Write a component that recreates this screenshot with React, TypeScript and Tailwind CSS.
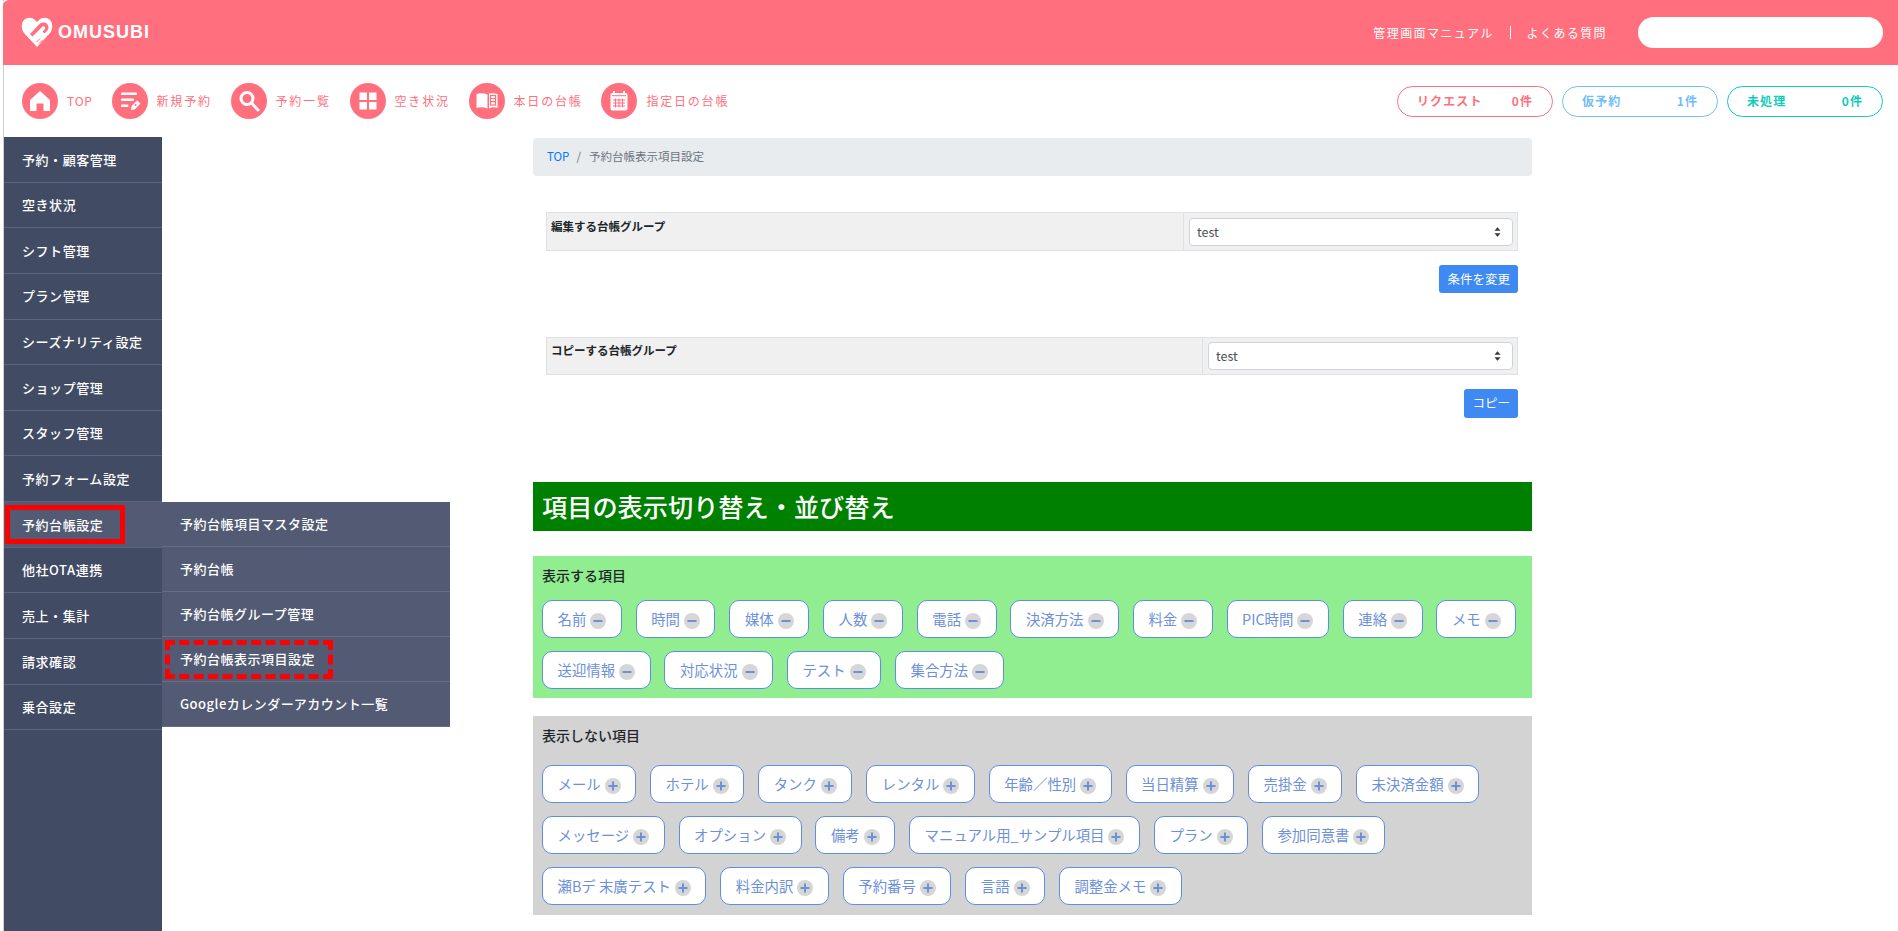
const FONT = '[font-family:"Noto_Sans_CJK_JP","Noto_Sans",sans-serif]';

const sideItems = [
  '予約・顧客管理',
  '空き状況',
  'シフト管理',
  'プラン管理',
  'シーズナリティ設定',
  'ショップ管理',
  'スタッフ管理',
  '予約フォーム設定',
  '予約台帳設定',
  '他社OTA連携',
  '売上・集計',
  '請求確認',
  '乗合設定',
];

const subItems = [
  '予約台帳項目マスタ設定',
  '予約台帳',
  '予約台帳グループ管理',
  '予約台帳表示項目設定',
  'Googleカレンダーアカウント一覧',
];

const shown = ['名前', '時間', '媒体', '人数', '電話', '決済方法', '料金', 'PIC時間', '連絡', 'メモ', '送迎情報', '対応状況', 'テスト', '集合方法'];
const hidden = [
  'メール', 'ホテル', 'タンク', 'レンタル', '年齢／性別', '当日精算', '売掛金', '未決済金額',
  'メッセージ', 'オプション', '備考', 'マニュアル用_サンプル項目', 'プラン', '参加同意書',
  '瀬Bデ 末廣テスト', '料金内訳', '予約番号', '言語', '調整金メモ',
];

function LogoMark() {
  return (
    <svg width="32" height="31" viewBox="0 0 32 31" className="shrink-0">
      <path d="M16 30 L3 16 C0 12 0 6 3 3 C6 0 11 0 14 3 L16 5 L18 3 C21 0 26 0 29 3 C32 6 32 12 29 16 Z" fill="#fff" />
      <path d="M9 17 L19 6.5 C21 5 24.5 5 26.2 7 C28 9 28 12 26 14 L23.5 16.5 L21.5 14.5 L24 12 C25 10.5 23 8.5 21.5 9.5 L11.5 19.5 Z" fill="#ff6f7d" />
      <path d="M13 19 L18 14 L24 18 L18.5 24 Z" fill="#fff" />
      <path d="M15.5 25 L19 21.5 M18 26.5 L21.5 23" stroke="#ff6f7d" strokeWidth="1" />
    </svg>
  );
}

function NavIcon({ name }: { name: string }) {
  return (
    <svg width="36" height="36" viewBox="0 0 36 36" className="shrink-0">
      <circle cx="18" cy="18" r="18" fill="#ff6f7d" />
      {name === 'home' && (
        <path d="M18 8 L28 17 V28 H21.5 V20.5 H14.5 V28 H8 V17 Z" fill="#fff" />
      )}
      {name === 'list' && (
        <g>
          <rect x="9" y="9.5" width="16" height="2.6" rx="1" fill="#fff" />
          <rect x="9" y="15.5" width="13" height="2.6" rx="1" fill="#fff" />
          <rect x="9" y="21.5" width="7.5" height="2.6" rx="1" fill="#fff" />
          <path d="M19 27 L19.6 23 L25 17.5 L28.5 20.5 L23 26.2 Z" fill="#fff" />
          <circle cx="23.6" cy="22" r="1" fill="#ff6f7d" />
        </g>
      )}
      {name === 'search' && (
        <g fill="none" stroke="#fff">
          <circle cx="16" cy="15.5" r="6" strokeWidth="3" />
          <path d="M20.5 20 L27 27" strokeWidth="3" strokeLinecap="round" />
        </g>
      )}
      {name === 'grid' && (
        <g fill="#fff">
          <rect x="9.5" y="9.5" width="7.5" height="7.5" />
          <rect x="19" y="9.5" width="7.5" height="7.5" />
          <rect x="9.5" y="19" width="7.5" height="7.5" />
          <rect x="19" y="19" width="7.5" height="7.5" />
        </g>
      )}
      {name === 'book' && (
        <g>
          <path d="M7.5 11 C11 10 14.5 10 18.5 11.5 V25.5 C14.5 24 11 24 7.5 25 Z" fill="#fff" />
          <path d="M20 10.5 C22.5 10 25.5 10 28.5 11 V25 C25.5 24 22.5 24 20 25.5 Z" fill="#fff" />
          <rect x="21.5" y="12.5" width="5" height="9.5" fill="none" stroke="#ff6f7d" strokeWidth="1.2" />
          <path d="M21.5 15.5 H26.5 M21.5 18.7 H26.5" stroke="#ff6f7d" strokeWidth="1.2" />
        </g>
      )}
      {name === 'calendar' && (
        <g>
          <rect x="9.5" y="10" width="17" height="17.5" rx="2" fill="#fff" />
          <rect x="12" y="8" width="1.8" height="3.5" fill="#fff" />
          <rect x="22.2" y="8" width="1.8" height="3.5" fill="#fff" />
          <rect x="11" y="12.2" width="14" height="1" fill="#ff6f7d" />
          <path d="M12 17 H24 M12 20 H24 M12 23 H24 M14.5 15.5 V24.5 M18 15.5 V24.5 M21.5 15.5 V24.5" stroke="#ff6f7d" strokeWidth="1" />
        </g>
      )}
    </svg>
  );
}

function StatusPill({ label, count, className }: { label: string; count: string; className: string }) {
  return (
    <div className={`flex h-[31px] w-[156px] items-center justify-between rounded-full border bg-white pl-[19px] pr-[19px] text-[12px] font-bold tracking-[1.1px] ${className}`}>
      <span>{label}</span>
      <span>{count}</span>
    </div>
  );
}

function ItemPill({ label, add }: { label: string; add?: boolean }) {
  return (
    <div className="flex h-[38px] items-center gap-[4px] rounded-[10px] border border-[#5f8ee0] bg-white px-[14.5px] text-[14.4px] text-[#6d90d8]">
      <span className="whitespace-nowrap">{label}</span>
      <svg width="16" height="16" viewBox="0 0 16 16" className="mt-[3px] shrink-0">
        <circle cx="8" cy="8" r="8" fill="#d6d6d6" />
        <path d={add ? 'M3.5 8 H12.5 M8 3.5 V12.5' : 'M3.5 8 H12.5'} stroke="#6d90d8" strokeWidth="2" />
      </svg>
    </div>
  );
}

function SelectBox() {
  return (
    <div className="relative h-[28px] flex-1">
      <select className="h-full w-full appearance-none rounded-[4px] border border-[#ced4da] bg-white pl-[7px] text-[12.5px] text-[#495057]">
        <option>test</option>
      </select>
      <svg width="7" height="10" viewBox="0 0 8 11" className="pointer-events-none absolute right-[12px] top-[9px]">
        <path d="M4 0 L7.5 4 H0.5 Z M4 11 L0.5 7 H7.5 Z" fill="#343a40" />
      </svg>
    </div>
  );
}

export default function App() {
  return (
    <div className={`relative h-[931px] w-full overflow-hidden bg-white pl-[3px] ${FONT}`}>
      <div className="h-full border-l border-[#cfcfcf]">
        {/* Header */}
        <header className="flex h-[65px] items-center justify-between bg-[#ff6f7d] pl-[18px] pr-[15px] -ml-px rounded-tl-[6px]">
          <div className="flex items-center gap-[5px] pb-[1px] text-white">
            <LogoMark />
            <span className="text-[18px] font-bold tracking-[1px] [font-family:'Liberation_Sans',sans-serif]">OMUSUBI</span>
          </div>
          <div className="flex items-center text-[12px] tracking-[1.4px] text-white">
            <span>管理画面マニュアル</span>
            <span className="mx-[16px] h-[13px] w-px bg-white" />
            <span>よくある質問</span>
            <input className="ml-[31px] h-[31px] w-[245px] rounded-full bg-white" />
          </div>
        </header>

        {/* Quick nav */}
        <nav className="flex h-[72px] items-center justify-between pl-[18px] pr-[15px] text-[12px] tracking-[1.8px] text-[#ff6f7d]">
          <div className="flex items-center gap-[18.8px]">
            {[
              ['home', 'TOP'],
              ['list', '新規予約'],
              ['search', '予約一覧'],
              ['grid', '空き状況'],
              ['book', '本日の台帳'],
              ['calendar', '指定日の台帳'],
            ].map(([icon, label]) => (
              <div key={label} className="flex items-center gap-[9px]">
                <NavIcon name={icon} />
                <span className={label === 'TOP' ? 'tracking-[0.8px]' : ''}>{label}</span>
              </div>
            ))}
          </div>
          <div className="flex items-center gap-[9px]">
            <StatusPill label="リクエスト" count="0件" className="border-[#ff6f7d] text-[#ff6f7d]" />
            <StatusPill label="仮予約" count="1件" className="border-[#74bdfb] text-[#74bdfb]" />
            <StatusPill label="未処理" count="0件" className="border-[#10ccb8] text-[#10ccb8]" />
          </div>
        </nav>

        <div className="flex">
          {/* Sidebar */}
          <aside className="relative h-[794px] w-[158px] shrink-0 bg-[#414b64]">
            {sideItems.map((item, i) => (
              <div
                key={item}
                className={`flex h-[45.65px] items-center border-b border-[#5c6579] pl-[18px] text-[13px] font-medium tracking-[0.55px] text-white ${i === 8 ? 'bg-[#525b73]' : ''}`}
              >
                {item}
              </div>
            ))}
            {/* Flyout */}
            <div className="absolute left-[158px] top-[365px] w-[288px] bg-[#525b73]">
              {subItems.map(item => (
                <div key={item} className="flex h-[45px] items-center border-b border-[#656e83] pl-[18px] text-[13px] font-medium tracking-[0.5px] text-white">
                  {item}
                </div>
              ))}
            </div>
          </aside>

          {/* Main */}
          <main className="ml-[371px] w-[999px] pt-px">
            <div className="flex h-[38px] items-center rounded-[4px] bg-[#e9ecef] pl-[14px] text-[11.5px]">
              <span className="text-[#007bff]">TOP</span>
              <span className="ml-[7px] mr-[8px] text-[#6c757d]">/</span>
              <span className="text-[#6c757d]">予約台帳表示項目設定</span>
            </div>

            <div className="ml-[13px] mr-[14px]">
              <div className="mt-[36px] flex h-[39px] border border-[#dee2e6] bg-[#f0f0f0]">
                <div className="w-[637px] border-r border-[#dee2e6] pl-[4px] pt-[5px] text-[11.5px] font-bold text-[#212529]">編集する台帳グループ</div>
                <div className="flex flex-1 items-center pl-[5px] pr-[4px]">
                  <SelectBox />
                </div>
              </div>
              <div className="mt-[14px] flex justify-end">
                <button className="h-[28px] rounded-[3px] bg-[#3e8af2] px-[8px] text-[12.5px] text-white">条件を変更</button>
              </div>

              <div className="mt-[44px] flex h-[38px] border border-[#dee2e6] bg-[#f0f0f0]">
                <div className="w-[656px] border-r border-[#dee2e6] pl-[4px] pt-[4px] text-[11.5px] font-bold text-[#212529]">コピーする台帳グループ</div>
                <div className="flex flex-1 items-center pl-[5px] pr-[4px]">
                  <SelectBox />
                </div>
              </div>
              <div className="mt-[14px] flex justify-end">
                <button className="h-[29px] rounded-[3px] bg-[#3e8af2] px-[8px] text-[12.5px] text-white">コピー</button>
              </div>
            </div>

            <h2 className="mt-[64px] flex h-[49px] items-center bg-[#008000] pl-[9px] text-[25.2px] font-medium text-white">
              項目の表示切り替え・並び替え
            </h2>

            <section className="mt-[25px] h-[142px] bg-[#90ee90] pl-[9px] pr-[10px] pt-[8px]">
              <h3 className="text-[14px] font-medium leading-[22px] text-[#212529]">表示する項目</h3>
              <div className="mt-[14px] flex flex-wrap gap-x-[13.9px] gap-y-[13px]">
                {shown.map(s => (
                  <ItemPill key={s} label={s} />
                ))}
              </div>
            </section>

            <section className="mt-[18px] h-[199px] bg-[#d3d3d3] pl-[9px] pr-[10px] pt-[8px]">
              <h3 className="text-[14px] font-medium leading-[22px] text-[#212529]">表示しない項目</h3>
              <div className="mt-[19px] flex max-w-[960px] flex-wrap gap-x-[13.9px] gap-y-[13px]">
                {hidden.map(s => (
                  <ItemPill key={s} label={s} add />
                ))}
              </div>
            </section>
          </main>
        </div>
      </div>

      {/* Red annotations on the screenshot */}
      <div className="pointer-events-none absolute left-[5px] top-[505px] h-[39px] w-[120px] border-[5px] border-[#ff0000]" />
      <div className="pointer-events-none absolute left-[165px] top-[640px] h-[39px] w-[168px] border-[5px] border-dashed border-[#ff0000]" />
    </div>
  );
}
